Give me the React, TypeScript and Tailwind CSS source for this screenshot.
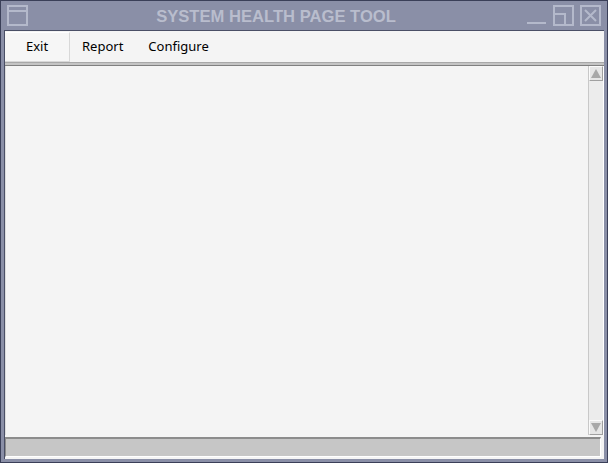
import React from 'react';

const ui = { fontFamily: '"Noto Sans", "DejaVu Sans", sans-serif' };
const title = { fontFamily: '"Liberation Sans", Arial, sans-serif' };

function WindowButtons() {
    return (
        <div className="flex items-center gap-[6px] pr-[6px]">
            {/* minimize */}
            <svg width="21" height="21" viewBox="0 0 21 21">
                <rect x="1" y="17" width="19" height="2" fill="#b4b9cb" />
            </svg>
            {/* maximize */}
            <svg width="21" height="21" viewBox="0 0 21 21" fill="none" stroke="#b4b9cb" strokeWidth="2">
                <rect x="1" y="1" width="19" height="19" />
                <path d="M1 9 H12 V20" />
            </svg>
            {/* close */}
            <svg width="21" height="21" viewBox="0 0 21 21" fill="none" stroke="#b4b9cb" strokeWidth="2">
                <rect x="1" y="1" width="19" height="19" />
                <path d="M5 5 L16 16 M16 5 L5 16" />
            </svg>
        </div>
    );
}

function Arrow({ up }: { up: boolean }) {
    return (
        <div className="h-[15px] w-[14px] bg-[#e6e6e6] border border-[#fafafa] border-r-[#a0a0a0] border-b-[#a0a0a0] flex items-center justify-center">
            <svg width="10" height="9" viewBox="0 0 10 9">
                {up
                    ? <path d="M5 0 L10 9 L0 9 Z" fill="#a8a8a8" />
                    : <path d="M0 0 L10 0 L5 9 Z" fill="#a8a8a8" />}
            </svg>
        </div>
    );
}

export default function App() {
    return (
        <div className="w-[608px] h-[463px] bg-[#8a8fa7] border border-[#3a3f58] flex flex-col overflow-hidden">
            {/* Title bar */}
            <div className="h-[29px] flex items-center justify-between shrink-0">
                <div className="pl-[6px]">
                    <svg width="21" height="21" viewBox="0 0 21 21" fill="none" stroke="#b4b9cb" strokeWidth="2">
                        <rect x="1" y="1" width="19" height="19" />
                        <path d="M1 6 H20" />
                    </svg>
                </div>
                <span className="text-[16.6px] font-bold text-[#b9bdcd] -ml-[2px] mt-[3px]" style={title}>
                    SYSTEM HEALTH PAGE TOOL
                </span>
                <WindowButtons />
            </div>

            {/* Client area */}
            <div className="flex-1 mx-[3px] mb-[3px] border-l border-t border-[#4a4f66] bg-[#f4f4f4] flex flex-col min-h-0">
                {/* Menu bar */}
                <div className="h-[31px] flex items-stretch text-[13px] text-black shrink-0 pt-[1px]" style={ui}>
                    <div className="w-[65px] flex items-center justify-center border-r border-b border-[#d8d8d8] border-t border-t-white bg-[#f6f6f6]">
                        Exit
                    </div>
                    <div className="pl-[12px] pr-[11px] flex items-center">Report</div>
                    <div className="px-[14px] flex items-center">Configure</div>
                </div>

                {/* Separator */}
                <div className="h-[4px] shrink-0 border-t border-[#a8a8a8] bg-[#c4c4c4] border-b border-b-[#808080]" />

                {/* Content area */}
                <div className="flex-1 flex min-h-0 border-l border-[#dcdcdc]">
                    <div className="flex-1 bg-[#f4f4f4]" />
                    <div className="w-[16px] flex flex-col bg-[#e0e0e0] border-l border-[#c8c8c8] border-r border-r-[#ffffff]">
                        <Arrow up />
                        <div className="flex-1 bg-[#ececec]" />
                        <Arrow up={false} />
                    </div>
                </div>

                {/* Status bar */}
                <div className="h-[24px] shrink-0 bg-[#f4f4f4] pt-[2px] pr-[3px] pb-[2px]">
                    <div className="h-full bg-[#c6c6c6] border-t-2 border-l border-[#8c8c8c] border-b border-b-white border-r border-r-white" />
                </div>
            </div>
        </div>
    );
}
